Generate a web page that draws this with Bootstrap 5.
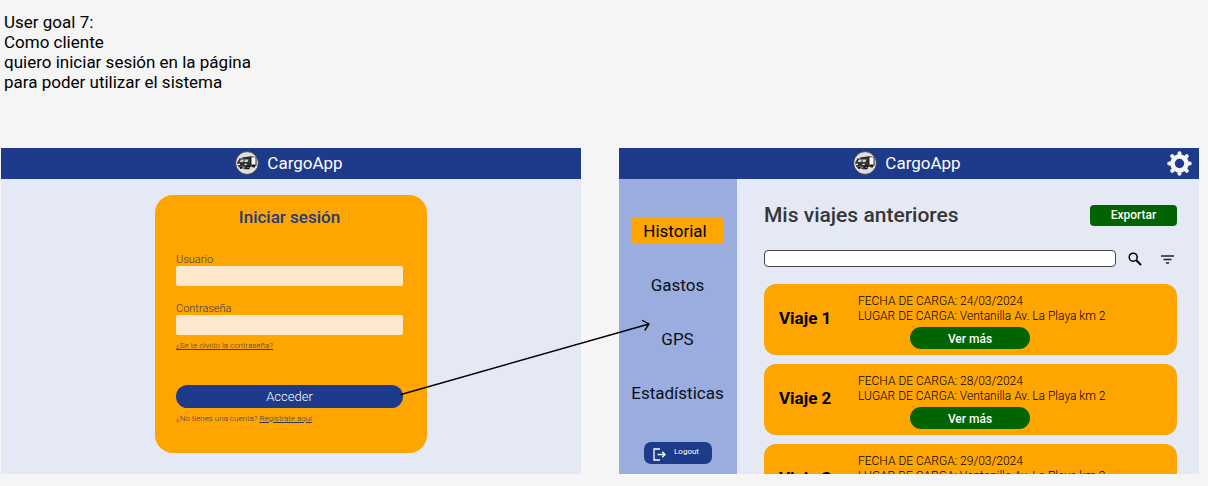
<!DOCTYPE html>
<html lang="es">
<head>
<meta charset="utf-8">
<meta name="viewport" content="width=device-width, initial-scale=1">
<title>CargoApp</title>
<link href="https://cdn.jsdelivr.net/npm/bootstrap@5.3.0/dist/css/bootstrap.min.css" rel="stylesheet">
<style>
  :root { --navy: #1e3a8a; --amber: #ffa500; --pale: #e5e9f5; --green: #006400; }
  body { background: #f5f5f5; color: #000; font-family: Roboto, "Liberation Sans", sans-serif; font-size: 17px; line-height: 20px; }
  .story { padding: 12px 4px 0; margin-bottom: 56px; }
  .screens { gap: 38px; padding: 0 9px 0 1px; }
  .screen { flex: 1 1 0; min-width: 0; background: var(--pale); }
  .topbar { height: 31px; background: var(--navy); color: #fff; padding: 0 4px 2px 0; }
  .gear { right: 7px; top: 3px; line-height: 0; }
  .login-area { padding: 16px 0 21px; }
  .login-card { width: 272px; padding: 12px 24px 29px 21px; border-radius: 18px; background: var(--amber); font-weight: 300; color: #333b52; }
  .login-title { font-size: 17px; line-height: 20px; font-weight: 500; color: #263b7c; margin-bottom: 26px; }
  .field-label { display: block; font-size: 11px; line-height: 13px; }
  .field-input { display: block; width: 100%; height: 20px; border: 0; border-radius: 2px; background: #fde8cd; padding: 0 6px; font-size: 12px; }
  .tiny { font-size: 8px; line-height: 10px; margin-top: 6px; }
  .tiny a, a.tiny { color: inherit; }
  .enter-row { padding-top: 34px; }
  .btn-enter { display: block; height: 23px; padding: 0; border: 0; border-radius: 12px; background: var(--navy); color: #fff; font-size: 13px; line-height: 23px; font-weight: 300; }
  .flow-arrow { left: 100%; bottom: 10px; margin-left: -3px; z-index: 2; pointer-events: none; }
  .side { width: 118px; background: #9badde; padding: 39px 13px 10px 12px; }
  .side-link { color: #0b0f1c; text-decoration: none; line-height: 26px; border-radius: 2px; text-align: center; display: block; white-space: nowrap; }
  .side-link.current { background: var(--amber); color: #000; padding-right: 5px; }
  .side-list { gap: 28px; }
  .btn-exit { width: 68px; height: 22px; padding: 0 3px 2px 0; border: 0; border-radius: 7px; background: var(--navy); color: #fff; font-size: 8px; margin-top: 36px; }
  .trips { padding: 26px 22px 0 27px; min-width: 0; }
  .trips-title { font-size: 21px; line-height: 21px; font-weight: 500; color: #363636; }
  .btn-export { width: 87px; height: 21px; border: 0; border-radius: 4px; background: var(--green); color: #fff; font-size: 12px; line-height: 21px; padding: 0; font-weight: 500; }
  .search-row { padding-right: 3px; }
  .search-box { height: 17px; border: 1px solid #444; border-radius: 4px; background: #fff; min-width: 0; padding: 0 6px; font-size: 12px; }
  .icon-btn { border: 0; background: none; padding: 0; line-height: 0; }
  .find { margin: 0 19px 0 12px; }
  .trip-list { height: 190px; overflow: hidden; gap: 9px; margin-top: 17px; }
  .trip { flex: none; height: 71px; border-radius: 12px; background: var(--amber); padding: 10px 15px 6px; }
  .trip-name { width: 79px; font-size: 17px; line-height: 20px; font-weight: 700; padding-top: 14px; flex: none; }
  .trip-info { font-size: 12px; line-height: 15px; font-weight: 300; white-space: nowrap; }
  .btn-more { width: 120px; height: 22px; border: 0; border-radius: 11px; background: var(--green); color: #fff; font-size: 12px; line-height: 24px; padding: 0; font-weight: 500; margin: 3px 0 0 52px; }
</style>
</head>
<body>
<svg width="0" height="0" class="position-absolute" aria-hidden="true">
  <symbol id="truck" viewBox="0 0 24 24">
    <circle cx="12" cy="12" r="11.400" fill="#dedede" stroke="#333" stroke-width=".8"/>
    <path d="M7 6.500 16 5.200 21.500 6v8.500L15 16z" fill="#252525"/>
    <path d="M16.500 6.300h4v7.400h-4z" fill="#fafafa"/>
    <path d="M4.500 7.500 15 6.800V16l-4 2.500-7.500-2.500-1.300-4.500z" fill="#333"/>
    <path d="M6 8.500h7.500l-1 2.500H4.500z" fill="#d4d4d4"/>
    <path d="M8.500 8.500h1v2.500h-1z" fill="#333"/>
    <path d="M3 12.700h2v1.300H3zM9.500 12.700h2.200v1.300H9.500z" fill="#eee"/>
    <path d="M5 15.200l5 .6v.9l-5-.7z" fill="#aaa"/>
    <circle cx="13" cy="16.500" r="2" fill="#111"/><circle cx="13" cy="16.500" r=".7" fill="#bbb"/>
    <circle cx="6" cy="16.700" r="1.200" fill="#111"/><circle cx="18.700" cy="15" r="1.600" fill="#111"/>
  </symbol>
</svg>

<p class="story">User goal 7:<br>Como cliente<br>quiero iniciar sesión en la página<br>para poder utilizar el sistema</p>

<main class="screens d-flex align-items-start">
  <section class="screen">
    <header class="topbar d-flex align-items-center justify-content-center gap-2">
      <svg width="24" height="24" aria-hidden="true"><use href="#truck"/></svg><span>CargoApp</span>
    </header>
    <div class="login-area d-flex justify-content-center">
      <form class="login-card">
        <h1 class="login-title text-center">Iniciar sesión</h1>
        <label class="field-label" for="user">Usuario</label>
        <input class="field-input mb-3" id="user" type="text">
        <label class="field-label" for="pass">Contraseña</label>
        <input class="field-input" id="pass" type="password">
        <a class="tiny d-block" href="#">¿Se te olvido la contraseña?</a>
        <div class="enter-row position-relative">
          <button class="btn-enter w-100" type="button">Acceder</button>
          <svg class="flow-arrow position-absolute" width="251" height="80" viewBox="0 0 251 80" fill="none" stroke="#000" stroke-width="1.400" aria-hidden="true"><path d="M1 76.500 249 6M242.500 2.500 249 6l-4 6" stroke-linecap="round"/></svg>
        </div>
        <div class="tiny">¿No tienes una cuenta? <a href="#">Registrate aquí</a></div>
      </form>
    </div>
  </section>

  <section class="screen">
    <header class="topbar position-relative d-flex align-items-center justify-content-center gap-2">
      <svg width="24" height="24" aria-hidden="true"><use href="#truck"/></svg><span>CargoApp</span>
      <button class="icon-btn gear position-absolute" type="button" aria-label="Configuración">
        <svg width="25" height="25" viewBox="-12.500 -12.500 25 25"><g fill="none" stroke="#f5f5f5"><circle r="7" stroke-width="4.600"/><path d="M0-9V-10.300M0 9v1.300M-9 0h-1.300M9 0h1.300M-6.400-6.400l-.9-.9M6.400 6.400l.9.900M-6.400 6.400l-.9.900M6.400-6.400l.9-.9" stroke-width="4" stroke-linecap="round"/></g></svg>
      </button>
    </header>
    <div class="d-flex">
      <nav class="side flex-shrink-0 d-flex flex-column align-items-center">
        <div class="side-list d-flex flex-column w-100">
          <a class="side-link current" href="#">Historial</a>
          <a class="side-link" href="#">Gastos</a>
          <a class="side-link" href="#">GPS</a>
          <a class="side-link" href="#">Estadísticas</a>
        </div>
        <button class="btn-exit d-flex align-items-center justify-content-center gap-2" type="button">
          <svg width="13" height="13" viewBox="0 0 13 13" fill="none" stroke="#fff" stroke-width="1.300" class="mt-1" aria-hidden="true"><path d="M7 1H1v11h6M4.500 6.500H12M9.300 3.700 12 6.500 9.300 9.300"/></svg><span>Logout</span>
        </button>
      </nav>
      <div class="trips flex-grow-1">
        <div class="d-flex justify-content-between">
          <h2 class="trips-title mb-0">Mis viajes anteriores</h2>
          <button class="btn-export" type="button">Exportar</button>
        </div>
        <div class="search-row d-flex align-items-center mt-4">
          <input class="search-box flex-grow-1" type="search" aria-label="Buscar viajes">
          <button class="icon-btn find" type="button" aria-label="Buscar"><svg width="14" height="14" viewBox="0 0 14 14" fill="none" stroke="#000"><circle cx="5.200" cy="5.200" r="4" stroke-width="1.500"/><path d="m8.300 8.300 4.700 4.700" stroke-width="2"/></svg></button>
          <button class="icon-btn" type="button" aria-label="Filtrar"><svg width="13" height="14" viewBox="0 0 13 14" stroke="#222" stroke-width="1.400"><path d="M0 4h13M2.500 7.500h8M5 11h3"/></svg></button>
        </div>
        <div class="trip-list d-flex flex-column">
          <article class="trip d-flex"><h3 class="trip-name mb-0">Viaje 1</h3><div class="trip-info">FECHA DE CARGA: 24/03/2024<br>LUGAR DE CARGA: Ventanilla Av. La Playa km 2<br><button class="btn-more d-block" type="button">Ver más</button></div></article>
          <article class="trip d-flex"><h3 class="trip-name mb-0">Viaje 2</h3><div class="trip-info">FECHA DE CARGA: 28/03/2024<br>LUGAR DE CARGA: Ventanilla Av. La Playa km 2<br><button class="btn-more d-block" type="button">Ver más</button></div></article>
          <article class="trip d-flex"><h3 class="trip-name mb-0">Viaje 3</h3><div class="trip-info">FECHA DE CARGA: 29/03/2024<br>LUGAR DE CARGA: Ventanilla Av. La Playa km 2<br><button class="btn-more d-block" type="button">Ver más</button></div></article>
        </div>
      </div>
    </div>
  </section>
</main>
<script src="https://cdn.jsdelivr.net/npm/bootstrap@5.3.0/dist/js/bootstrap.bundle.min.js"></script>
</body>
</html>
